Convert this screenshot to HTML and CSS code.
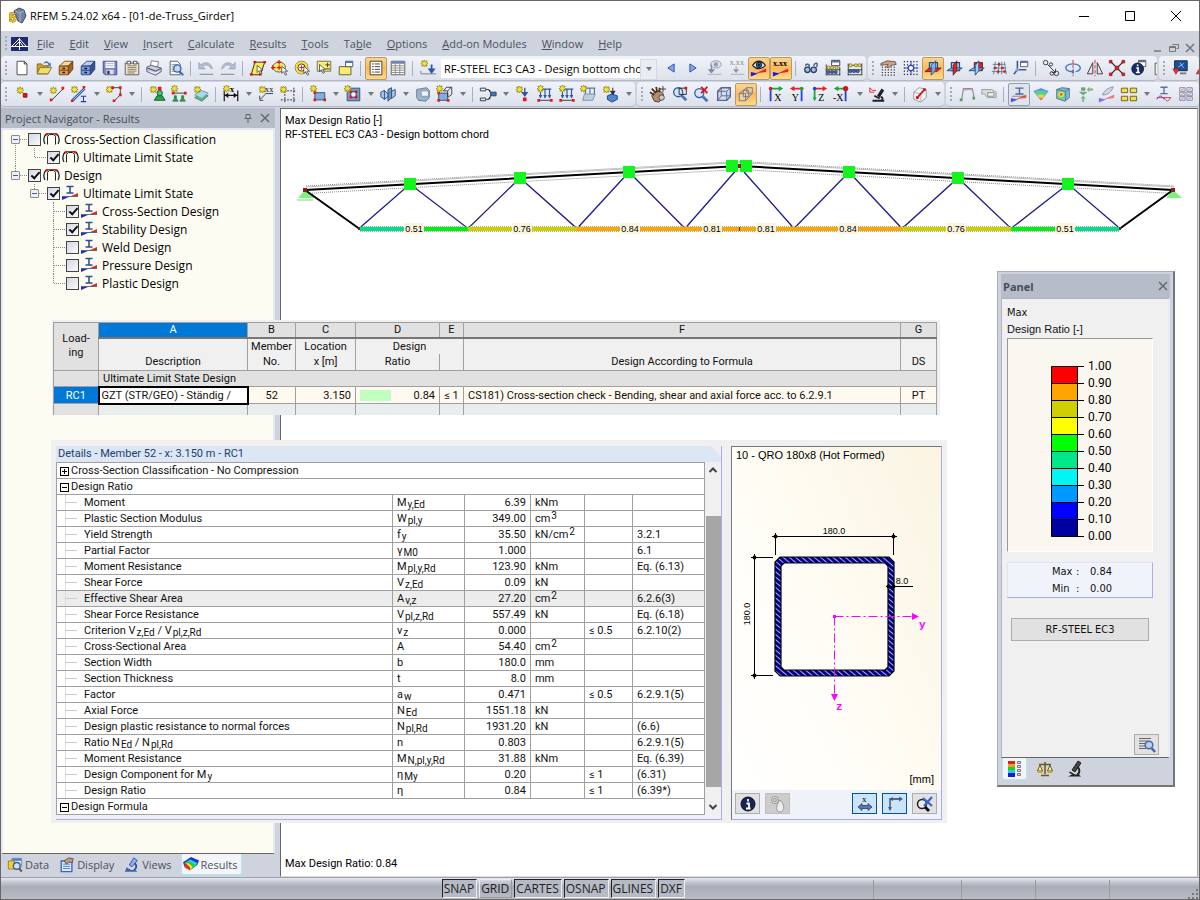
FILE: index.html
```html
<!DOCTYPE html>
<html lang="en">
<head>
<meta charset="utf-8">
<title>RFEM 5.24.02 x64 - [01-de-Truss_Girder]</title>
<link rel="stylesheet" href="styles.css">
</head>
<body>
<svg class="sprite" aria-hidden="true">
<defs>
<g id="st"><path d="M4 0v8M0 4h8M1 1l6 6M7 1l-6 6" stroke="#8f8420" stroke-width="1.6"/><path d="M4 1v6M1 4h6M2 2l4 4M6 2l-4 4" stroke="#ffee2a"/></g>
<g id="cur"><path d="M0 0v8l2-2 2 4 1.500-.8-2-3.700h3z" fill="#fff" stroke="#333" stroke-width=".8"/></g>
<g id="grad"><path d="M0 4v5l8-3.500z" fill="#1c1ce0"/><path d="M5 5.500L17 0v4z" fill="#e02a2a"/></g>
<linearGradient id="rainbow" x1="0" y1="0" x2="1" y2="1"><stop offset="0" stop-color="#2030ff"/><stop offset=".3" stop-color="#10d8f0"/><stop offset=".5" stop-color="#20e020"/><stop offset=".7" stop-color="#f6f020"/><stop offset="1" stop-color="#f02020"/></linearGradient>
<radialGradient id="soft" cx=".5" cy="1" r="1"><stop offset="0" stop-color="#f04030"/><stop offset=".35" stop-color="#f6e040"/><stop offset=".6" stop-color="#50d860"/><stop offset=".8" stop-color="#50c8e8"/><stop offset="1" stop-color="#5060e0"/></radialGradient>
<symbol id="new" viewBox="0 0 20 20"><path d="M4.500 2.500h8l3 3v12h-11z" fill="#fff" stroke="#444"/><path d="M12.500 2.500v3h3" class="k"/></symbol>
<symbol id="open" viewBox="0 0 20 20"><path d="M2.500 16.500v-11h5l1 2h6v9z" fill="#c9a62e" stroke="#77621a"/><path d="M2.500 16.500l3-7h13l-4 7z" fill="#f3dc73" stroke="#8a7320"/><path d="M9 5c3-4 6-3 7 0l1.500-1v5l-4-2 1.500-1c-1-2-3-2-6-1" fill="#4d74b8"/></symbol>
<symbol id="cabo" viewBox="0 0 20 20"><path d="M2.500 8l6-5.500h9l-4 5z" fill="#fbd89a" stroke="#7b4d14"/><path d="M12.500 8l5-5.500v9l-5 6z" fill="#a0641c" stroke="#5c3a0c"/><path d="M2.500 8h10v9.500h-10z" fill="#e0a04a" stroke="#6b4412"/><path d="M2.500 12.500h10" stroke="#6b4412"/><path d="M6 10.500h3M6 15h3" stroke="#2a1804" stroke-width="1.500"/></symbol>
<symbol id="cabb" viewBox="0 0 20 20"><path d="M2.500 8l6-5.500h9l-4 5z" fill="#b8cff2" stroke="#2c4780"/><path d="M12.500 8l5-5.500v9l-5 6z" fill="#32549c" stroke="#1f3569"/><path d="M2.500 8h10v9.500h-10z" fill="#7d9fe0" stroke="#263f78"/><path d="M2.500 12.500h10" stroke="#263f78"/><path d="M6 10.500h3M6 15h3" stroke="#0c1838" stroke-width="1.500"/></symbol>
<symbol id="save" viewBox="0 0 20 20"><path d="M2.500 2.500h15v15h-13l-2-2z" fill="#7f83c4" stroke="#44477c"/><path d="M5 3h10v7H5z" fill="#f4f4fb"/><path d="M6 5h8M6 7.500h8" stroke="#b0b4d0"/><path d="M6 12h8v5H6z" fill="#dcdce8"/><path d="M7 13h2.500v4H7z" fill="#333"/></symbol>
<symbol id="note" viewBox="0 0 20 20"><path d="M2.500 4.500h15v13h-15z" fill="#efe4cf" stroke="#555"/><path d="M5 7.500h10M5 9.500h10M5 11.500h10M5 13.500h10M5 15.500h8" stroke="#8a7c64"/><path d="M4.500 2.500h4v3h-4zM11.500 2.500h4v3h-4z" fill="#fff" stroke="#444"/></symbol>
<symbol id="print" viewBox="0 0 20 20"><path d="M6 8l1-6 8 1-1 6z" fill="#fff" stroke="#777"/><path d="M2 9l5-2 11 3v4l-6 4-10-4z" fill="#c9cbe0" stroke="#555a80"/><path d="M2.500 10l9.500 3.500 5.500-3" class="k"/><path d="M5 14l6 2 4-2" stroke="#fff" fill="none"/></symbol>
<symbol id="prev" viewBox="0 0 20 20"><path d="M3.500 2.500h8l3 3v12h-11z" fill="#fff" stroke="#555"/><path d="M5 6h7M5 8h6M5 10h4M5 12h3M5 14h4" stroke="#888"/><circle cx="11.500" cy="10.500" r="4" fill="#bcd6f4" fill-opacity=".9" stroke="#3a62a8" stroke-width="1.500"/><path d="M14 14l4 4" stroke="#4a70b8" stroke-width="2.500"/></symbol>
<symbol id="undo" viewBox="0 0 20 20"><path d="M2 4v7h7L6.500 8.500C9 6 13 6 15 10l2 1C16 4 9 2 4.500 6.500z" fill="#b4bed0" stroke="#8b97ae" stroke-width=".7"/><path d="M3 17h15" stroke="#999" stroke-width="1.500"/></symbol>
<symbol id="redo" viewBox="0 0 20 20"><path d="M18 4v7h-7l2.500-2.500C11 6 7 6 5 10l-2 1C4 4 11 2 15.500 6.500z" fill="#b4bed0" stroke="#8b97ae" stroke-width=".7"/><path d="M2 17h15" stroke="#999" stroke-width="1.500"/></symbol>
<symbol id="selp" viewBox="0 0 20 20"><path d="M2.500 17.500l4-14h11l-5 14z" fill="#fbee4c" stroke="#222"/><path d="M5 3.500h3M16 3.500h3M1 17h3M11 17h3" stroke="#d11" stroke-width="2.500"/><use href="#cur" x="9" y="7"/></symbol>
<symbol id="sele" viewBox="0 0 20 20"><ellipse cx="9" cy="9" rx="7" ry="5.500" fill="#fbee6c" stroke="#555"/><path d="M9 1v5M6.500 3.500h5M2 7v5M0 9.500h5M9 7v5M6.500 9.500h5" stroke="#e01010" stroke-width="1.300"/><use href="#cur" x="12" y="8"/></symbol>
<symbol id="selr" viewBox="0 0 20 20"><circle cx="9.500" cy="9.500" r="7" fill="#fff" stroke="#333"/><circle cx="9.500" cy="9.500" r="5.500" fill="none" stroke="#fbe22c" stroke-width="3"/><circle cx="9.500" cy="9.500" r="4" class="k"/><path d="M9.500 7v5M7 9.500h5" stroke="#e01010"/><use href="#cur" x="12" y="8"/></symbol>
<symbol id="selpm" viewBox="0 0 20 20"><path d="M2.500 2.500h15v11h-15z" fill="#fbee6c" stroke="#666"/><path d="M14 4v5M11.500 6.500h5M11.500 11h5" stroke="#333"/><use href="#cur" x="5" y="6"/></symbol>
<symbol id="selw" viewBox="0 0 20 20"><path d="M2.500 8.500h13v9h-13z" fill="#fbee6c" stroke="#555"/><path d="M9.500 2.500h8v6h-8z" fill="#fff" stroke="#555"/><path d="M9.500 3.500h8" stroke="#5572b0" stroke-width="2"/></symbol>
<symbol id="navlist" viewBox="0 0 20 20"><path d="M3.500 2.500h13v15h-13z" fill="#fff" stroke="#333"/><path d="M5.500 5.500h2M5.500 8.500h2M5.500 11.500h2M5.500 14.500h2M8.500 5.500h6M8.500 8.500h6M8.500 11.500h6M8.500 14.500h6" stroke="#333"/></symbol>
<symbol id="tbl" viewBox="0 0 20 20"><path d="M2.500 2.500h15v15h-15z" fill="#fff" stroke="#555"/><path d="M3 4h14" stroke="#6a83b8" stroke-width="2.500"/><path d="M3 7.500h14M3 10h14M3 12.500h14M3 15h14M7 5v12M12 5v12" stroke="#888"/></symbol>
<symbol id="lc" viewBox="0 0 20 20"><use href="#st" x="2" y="1"/><path d="M2 16.500h17M2 13v3" stroke="#777"/><path d="M14 6v8M11.500 11.500l2.500 3.500 2.500-3.500z" stroke="#2c56a8" stroke-width="2" fill="#2c56a8"/></symbol>
<symbol id="lt" viewBox="0 0 20 20"><path d="M13.500 5.500v9l-7-4.500z" fill="#86a8ec" stroke="#2546b0"/></symbol>
<symbol id="gt" viewBox="0 0 20 20"><path d="M6.500 5.500v9l7-4.500z" fill="#86a8ec" stroke="#2546b0"/></symbol>
<symbol id="eyeoff" viewBox="0 0 20 20"><ellipse cx="11" cy="6" rx="6" ry="4" fill="#dfe5ee" stroke="#8e98aa"/><circle cx="11" cy="6" r="2.500" fill="#8da0c0"/><path d="M6 6v8M3.500 12l2.500 3 2.500-3z" stroke="#7f8ba5" stroke-width="1.500" fill="#7f8ba5"/><path d="M2 17h15" stroke="#aaa"/></symbol>
<symbol id="xxoff" viewBox="0 0 20 20"><text x="2" y="7" class="xt" fill="#888">x.xx</text><path d="M9 8v6M6.500 12l2.500 3 2.500-3z" stroke="#8c97ac" fill="#8c97ac"/><path d="M3 17h15" stroke="#aaa"/></symbol>
<symbol id="eye" viewBox="0 0 20 20"><path d="M3 7c4-6 10-6 14 0-4 5-10 5-14 0z" fill="#e8eef8" stroke="#222" stroke-width="1.400"/><circle cx="10" cy="6.500" r="3" fill="#2b58b0" stroke="#111"/><circle cx="10" cy="6.500" r="1" fill="#000"/><use href="#grad" x="1" y="10.500"/></symbol>
<symbol id="xx" viewBox="0 0 20 20"><text x="1" y="8" class="xt xb">x.xx</text><use href="#grad" x="1" y="10.500"/></symbol>
<symbol id="glasses" viewBox="0 0 20 20"><path d="M4 8c0-4 5-2 4 1M13 8c1-5 6-4 3 1" stroke="#49628f" stroke-width="1.600" fill="none"/><circle cx="6" cy="12" r="3" fill="#a8bfe2" stroke="#2e4470" stroke-width="1.500"/><circle cx="13" cy="12" r="3" fill="#a8bfe2" stroke="#2e4470" stroke-width="1.500"/></symbol>
<symbol id="abw" viewBox="0 0 20 20"><path d="M2.500 6v12M17.500 9v9M2 17.500h16M2 12h16" class="k"/><path d="M8.500 1.500h9v6h-9z" fill="#fff" stroke="#333"/><path d="M9 3h8" stroke="#5572b0" stroke-width="2"/><g fill="#ecd44a" stroke="#6b5d14" stroke-width=".7"><circle cx="5" cy="9.500" r="1.800"/><circle cx="9" cy="9.500" r="1.800"/><circle cx="14" cy="9.500" r="1.800"/></g><g fill="#3f66b8" stroke="#1c2f60" stroke-width=".7"><circle cx="5" cy="14.500" r="1.800"/><circle cx="9" cy="14.500" r="1.800"/><circle cx="13" cy="14.500" r="1.800"/></g></symbol>
<symbol id="ab" viewBox="0 0 20 20"><path d="M2.500 5v13M17.500 5v13M2 17.500h16M2 12h16M2 7h16" class="k"/><g fill="#ecd44a" stroke="#6b5d14" stroke-width=".7"><circle cx="5" cy="7" r="1.800"/><circle cx="11" cy="7" r="1.800"/><circle cx="15" cy="7" r="1.800"/></g><g fill="#3f66b8" stroke="#1c2f60" stroke-width=".7"><circle cx="5" cy="13.500" r="1.800"/><circle cx="9" cy="13.500" r="1.800"/><circle cx="13" cy="13.500" r="1.800"/></g></symbol>
<symbol id="handgrid" viewBox="0 0 20 20"><path d="M2 9h16M2 12h16M2 15h16M2 18h16" stroke="#333" stroke-width="1.300" stroke-dasharray="1.300 2"/><path d="M1 5l7-3 9 1 1 3-5 1-4 3-2-1 2-3-8 1z" fill="#c9a287" stroke="#4e3a2a" stroke-width=".8"/></symbol>
<symbol id="grid" viewBox="0 0 20 20"><path d="M2 3h16M2 6.500h16M2 13.500h16M2 17h16M2 10h16" stroke="#222" stroke-width="1.300" stroke-dasharray="1.300 2.200"/><path d="M10 2v16M2 10h16" stroke="#2c40c8"/><circle cx="10" cy="10" r="3" fill="#fff" stroke="#2c40c8" stroke-width="1.300"/></symbol>
<symbol id="cube1" viewBox="0 0 20 20"><path d="M6 4h9v9H6z" fill="#a9d0f0" stroke="#1c4f88" stroke-width="1.300"/><path d="M1 14l5-4h13l-5 4z" fill="#f02020" stroke="#5a1010" stroke-width=".8"/><path d="M8 7l5-5v11l-5 5z" fill="#78b4e8" fill-opacity=".8" stroke="#1c4f88"/></symbol>
<symbol id="cube2" viewBox="0 0 20 20"><path d="M6 4h9v9H6z" fill="#a9d0f0" stroke="#1c4f88" stroke-width="1.300"/><path d="M1 13l5-3h12l-5 3z" fill="#78b4e8" stroke="#1c4f88"/><path d="M8 7l4-5v11l-4 5z" fill="#f02020" stroke="#5a1010" stroke-width=".8"/></symbol>
<symbol id="cube3" viewBox="0 0 20 20"><path d="M7 4h9v9H7z" fill="#f02020" stroke="#5a1010"/><path d="M1 13l5-3h12l-5 3z" fill="#78b4e8" stroke="#1c4f88"/><path d="M8 7l4-5v11l-4 5z" fill="#a9d0f0" stroke="#1c4f88"/></symbol>
<symbol id="gridred" viewBox="0 0 20 20"><path d="M4 17L6 3M9 17l1-14M13 17V3M18 17L16 3M3 6h14M3 10h15M2 14h16" stroke="#4a86a0" fill="none"/><path d="M10 6h.1M6 10h.1M14 10h.1M9 14h.1M16 14h.1" stroke="#e01818" stroke-width="3" stroke-linecap="round"/></symbol>
<symbol id="axwin" viewBox="0 0 20 20"><path d="M9.500 2.500h8v6h-8z" fill="#fff" stroke="#555"/><path d="M10 3.500h7" stroke="#5572b0" stroke-width="2"/><path d="M6 2v10h10M6 12l-4 5" stroke="#3a5ea0" stroke-width="1.800" fill="none"/><circle cx="6" cy="12" r="2" fill="#88a4d8"/></symbol>
<symbol id="circ" viewBox="0 0 20 20"><circle cx="4" cy="4" r="2.500" class="k"/><circle cx="10" cy="6" r="1.800" class="k"/><path d="M6 6l9 9M15 15v-4M15 15h-4" class="k"/><circle cx="11" cy="16" r="2" class="k"/><circle cx="16" cy="16" r="2.500" class="k"/></symbol>
<symbol id="rot" viewBox="0 0 20 20"><path d="M10 1v18" stroke="#e02020" stroke-dasharray="4 1.500"/><path d="M8 14c-7-1-8-6-2-8 5-1.500 12 0 12 4 0 2-2 3.500-5 4" stroke="#4a78c0" stroke-width="1.600" fill="none"/><path d="M11 11v6l-4-3z" fill="#4a78c0"/></symbol>
<symbol id="mirror" viewBox="0 0 20 20"><path d="M10 1v18" stroke="#e02020" stroke-dasharray="4 1.500"/><path d="M7.500 4v12.500h-6zM12.500 4v12.500h6z" class="k"/></symbol>
<symbol id="xred" viewBox="0 0 20 20"><path d="M3 3l14 14M17 3L3 17" stroke="#222" stroke-width="1.300"/><path d="M1.500 1.500h3v3h-3zM15.500 1.500h3v3h-3zM1.500 15.500h3v3h-3zM15.500 15.500h3v3h-3zM8 8h4v4H8z" fill="#f01818" stroke="#700" stroke-width=".6"/></symbol>
<symbol id="infow" viewBox="0 0 20 20"><path d="M9.500 1.500h8v7h-8z" fill="#fff" stroke="#555"/><path d="M10 2.500h7" stroke="#667" stroke-width="2"/><circle cx="8.500" cy="11" r="6.500" fill="#1a2c68" stroke="#0a1538"/><path d="M8.500 6v2M7 10h2v5M6.500 15h4.500" stroke="#fff" stroke-width="1.800" fill="none"/></symbol>
<symbol id="clip" viewBox="0 0 20 20"><path d="M3.500 4.500h10v13h-10z" fill="#f6efd8" stroke="#555"/><path d="M6 3h6M6 8.500h6M6 11.500h6" stroke="#555"/></symbol>
<symbol id="mon" viewBox="0 0 20 20"><path d="M4 2h14v11H4z" fill="#1c4f98" stroke="#123"/><path d="M8 9l6-4M10 4l4 6" stroke="#8cd0ff"/><path d="M2 11l7 0-3.500 6z" fill="#f03030" stroke="#901010" stroke-width=".6"/><path d="M10 16h7" stroke="#777" stroke-width="2"/></symbol>
<symbol id="tri" viewBox="0 0 20 20"><path d="M3 17l3-6 3 6z" fill="#e03030"/></symbol>
<symbol id="node" viewBox="0 0 20 20"><use href="#st" x="4" y="2"/><path d="M11.500 9.500h4v4h-4z" fill="#e81818" stroke="#900"/></symbol>
<symbol id="line" viewBox="0 0 20 20"><use href="#st" x="2" y="2"/><path d="M4 17L17 4" class="k"/><path d="M2 15h3v3H2zM15 2h3v3h-3z" fill="#e81818"/></symbol>
<symbol id="memb" viewBox="0 0 20 20"><use href="#st" x="1" y="1"/><path d="M3 17L16 4" stroke="#2e5aa8" stroke-width="3"/><path d="M3 17L16 4" stroke="#bcd8f4"/><path d="M1 16h3v3H1zM14 1h3v3h-3z" fill="#e81818"/><path d="M12 12.500h6M12 18.500h6M15 12.500v6" stroke="#2a3f90" stroke-width="1.200"/></symbol>
<symbol id="poly" viewBox="0 0 20 20"><use href="#st" x="1" y="1"/><path d="M8 3h9v8l-7 7" class="k"/><path d="M7 1.500h3v3H7zM15.500 1.500h3v3h-3zM15.500 9.500h3v3h-3zM8.500 16h3v3h-3z" fill="#e81818"/></symbol>
<symbol id="supp" viewBox="0 0 20 20"><use href="#st" x="2" y="1"/><path d="M11 2h4v4h-4z" fill="#e81818"/><circle cx="13" cy="9" r="3" fill="#4fc070" stroke="#145c28"/><path d="M10 12h6l3 5H7z" fill="#2fa052" stroke="#145c28"/></symbol>
<symbol id="supp2" viewBox="0 0 20 20"><use href="#st" x="1" y="0"/><path d="M3 9h14" class="k"/><path d="M2 7.500h3v3H2zM15.500 7.500h3v3h-3z" fill="#e81818"/><circle cx="6" cy="13" r="1.800" fill="#2fa052"/><circle cx="14" cy="13" r="1.800" fill="#2fa052"/><path d="M6 13l3 5H3zM14 13l3 5h-6z" fill="#2fa052" stroke="#145c28" stroke-width=".6"/></symbol>
<symbol id="surf" viewBox="0 0 20 20"><path d="M3 14l7-5 8 3-7 6z" fill="#6fae7e" stroke="#4b8a5c"/><path d="M3 11l7-5 8 3-7 6z" fill="#a8d8ec" stroke="#5c9cb0"/><use href="#st" x="2" y="1"/></symbol>
<symbol id="dim" viewBox="0 0 20 20"><path d="M2.500 6v12M17.500 6v12M3 11.500h14" stroke="#111" stroke-width="1.300"/><path d="M3 11.500l4-3v6zM17 11.500l-4-3v6z" fill="#111"/><use href="#st" x="1" y="0"/><text x="9" y="8" class="xt xb">x</text></symbol>
<symbol id="comm" viewBox="0 0 20 20"><use href="#st" x="2" y="1"/><text x="9" y="8" class="xt">xx</text><path d="M18 9.500h-8l-7 7M3 16v-4M3 17h4" class="k"/></symbol>
<symbol id="gl" viewBox="0 0 20 20"><path d="M6.500 3v16M16.500 3v16M2 6.500h17M2 16.500h17" stroke="#222" stroke-dasharray="2 1.500"/><use href="#st" x="1" y="1"/></symbol>
<symbol id="rect" viewBox="0 0 20 20"><path d="M6.500 8.500h11v8h-11z" fill="#7fb0dc" stroke="#2a4a80"/><path d="M5 7h3v3H5zM16 15h3v3h-3zM5 15h3v3H5z" fill="#e81818"/><use href="#st" x="1" y="0"/></symbol>
<symbol id="openg" viewBox="0 0 20 20"><path d="M3.500 3.500h14v14h-14z" fill="#6f9fd0" stroke="#2a4a80"/><path d="M7.500 7.500h6v6h-6z" fill="#e8f0f8" stroke="#333"/><path d="M6 6h3v3H6zM12 6h3v3h-3zM6 12h3v3H6zM12 12h3v3h-3z" fill="#e81818"/><use href="#st" x="0" y="0"/></symbol>
<symbol id="inter" viewBox="0 0 20 20"><path d="M2 8l4-2 4 4 4-3 4-2v7l-4 3-4-2-4 3-4-3z" fill="#a8ccec" stroke="#26466f"/><path d="M10 5l4-2v11l-4 4z" fill="#5c8cc0" fill-opacity=".8" stroke="#26466f"/><path d="M6 6v10" stroke="#26466f"/></symbol>
<symbol id="solid" viewBox="0 0 20 20"><path d="M3 5l11-2 3 3v8l-4 4-8-1-2-3z" fill="#9db3cc" stroke="#5e7690"/><path d="M8 6.500h8v6H8z" fill="#f0f4fa" stroke="#8090a4"/></symbol>
<symbol id="solid2" viewBox="0 0 20 20"><path d="M3 9h10v8H3z" fill="#7fb0dc" stroke="#2a4a80"/><path d="M8.500 6.500l3-4h6v8l-4 3" class="k"/><path d="M8 6.500h5V13M13 6.500l4-4" class="k"/><path d="M1.500 7.500h3v3h-3zM1.500 15.500h3v3h-3zM12 15.500h3v3h-3z" fill="#e81818"/><use href="#st" x="0" y="0"/></symbol>
<symbol id="loadc" viewBox="0 0 20 20"><path d="M1.500 3.500h6v3h-6zM1.500 14.500h6v3h-6z" class="k"/><path d="M8 5h3l3 5-3 6H8" class="k"/><path d="M10 5l3 1-1 2zM10 16l3-1-1-2z" fill="#222"/><path d="M13 8h6v4h-6z" fill="#3f74c0" stroke="#1c3f78"/></symbol>
<symbol id="nload" viewBox="0 0 20 20"><use href="#st" x="2" y="1"/><path d="M12 3v8M9.500 8.500l2.500 3.500 2.500-3.500z" stroke="#2c56a8" fill="#2c56a8" stroke-width="1.500"/><path d="M10 14h4v4h-4z" fill="#e81818"/></symbol>
<symbol id="lload" viewBox="0 0 20 20"><path d="M3 4.500h14M5 5v9M10 5v9M15 5v9" stroke="#2c56a8" stroke-width="1.300"/><path d="M3 11h4l-2 4zM8 11h4l-2 4zM13 11h4l-2 4z" fill="#2c56a8"/><path d="M3 17h14" class="k"/><path d="M1.500 15.500h3v3h-3zM15.500 15.500h3v3h-3z" fill="#e81818"/><use href="#st" x="1" y="0"/></symbol>
<symbol id="sload" viewBox="0 0 20 20"><path d="M4 3.500h13M6 4v7M11 4v7M16 4v7" stroke="#55799c" stroke-width="1.300"/><path d="M5 10h12l-3 7H3z" fill="#bcd0de" stroke="#7890a4"/><use href="#st" x="0" y="0"/></symbol>
<symbol id="vload" viewBox="0 0 20 20"><path d="M6 12l5-2 6 2v4l-6 3-5-3z" fill="#4f88cc" stroke="#1c3f78"/><path d="M12 3v6M9.500 7l2.500 3.500L14.500 7z" stroke="#222" fill="#2c56a8"/><use href="#st" x="1" y="1"/></symbol>
<symbol id="hand" viewBox="0 0 20 20"><path d="M5 9l3-2 5 0 3 3-1 5-4 4-5-1-3-6z" fill="#b48e70" stroke="#4a3524"/><path d="M3 4l5 5M8 2l1 6M1 8l5 3M12 3l-1 5" stroke="#4a3524" stroke-width="2"/><path d="M15.500 1v7M12 4.500h7" stroke="#333"/><circle cx="14" cy="14" r="3" fill="#ccc" stroke="#444"/></symbol>
<symbol id="zoomr" viewBox="0 0 20 20"><circle cx="8" cy="8" r="5" fill="#d4e4fa" stroke="#345ca4" stroke-width="1.500"/><path d="M12 12l5 5" stroke="#4a70c0" stroke-width="3"/><path d="M9 3.500h8v7H9z" fill="none" stroke="#222"/><path d="M15 2h3v3h-3z" fill="#d01818"/></symbol>
<symbol id="zoomx" viewBox="0 0 20 20"><circle cx="7" cy="9" r="5" fill="#d4e4fa" stroke="#345ca4" stroke-width="1.500"/><path d="M11 13l5 5" stroke="#4a70c0" stroke-width="3"/><path d="M9 2l7 7M16 2L9 9" stroke="#d01818" stroke-width="2"/></symbol>
<symbol id="wire" viewBox="0 0 20 20"><path d="M3 7l4-4h10v10l-4 4H3z" fill="#d0dcf0" stroke="#56688c" stroke-width="1.500"/><path d="M3 7h10v10M13 7l4-4M7 3v9h10M7 12l-4 5" stroke="#56688c" fill="none"/></symbol>
<symbol id="persp" viewBox="0 0 20 20"><path d="M2.500 9.500h7v8h-7zM7 6h6v7H7zM11 3h6v6h-6z" fill="#f6cf8c" stroke="#6874a0"/><path d="M2.500 9.500L11 3M9.500 17.500L17 9" stroke="#6874a0"/></symbol>
<symbol id="vx" viewBox="0 0 20 20"><path d="M4 5v13" stroke="#2440e0" stroke-width="2"/><path d="M2.500 4h12" stroke="#18a838" stroke-width="2"/><path d="M13 1l5 3-5 3z" fill="#18a838"/><circle cx="4" cy="4" r="2" fill="#e01818"/><text x="8" y="18" class="ax">X</text></symbol>
<symbol id="vy" viewBox="0 0 20 20"><path d="M14 5v13" stroke="#2440e0" stroke-width="2"/><path d="M4 4h12" stroke="#e02828" stroke-width="2"/><path d="M6 1L1 4l5 3z" fill="#e02828"/><circle cx="14" cy="4" r="2" fill="#18a838"/><text x="3" y="18" class="ax">Y</text></symbol>
<symbol id="vz" viewBox="0 0 20 20"><path d="M4 4v12" stroke="#18a838" stroke-width="2"/><path d="M2 14h4l-2 4z" fill="#18a838"/><path d="M4 4h11" stroke="#e02828" stroke-width="2"/><path d="M13 1l5 3-5 3z" fill="#e02828"/><circle cx="4" cy="4" r="2" fill="#2440e0"/><text x="8" y="18" class="ax">Z</text></symbol>
<symbol id="vmx" viewBox="0 0 20 20"><path d="M14 5v13" stroke="#2440e0" stroke-width="2"/><path d="M3 4h12" stroke="#18a838" stroke-width="2"/><path d="M6 1L1 4l5 3z" fill="#18a838"/><circle cx="14" cy="4" r="3" fill="#d01818"/><text x="0" y="18" class="ax">-X</text></symbol>
<symbol id="micro" viewBox="0 0 20 20"><path d="M10 12l5-8 3 2-5 8z" fill="#222"/><path d="M5 17.500h13M7 12l6 3M14 13c3 1 3 3 0 5" stroke="#222" stroke-width="2" fill="none"/><path d="M2 3v5h5M2 3l3 3h4" stroke="#e02020" fill="none"/></symbol>
<symbol id="clipc" viewBox="0 0 20 20"><path d="M3 8l6-5 8 2v9l-6 5-8-3z" fill="#eef1f5" stroke="#999"/><path d="M3 8l8 2v9M11 10l6-5" stroke="#aaa" fill="none"/><path d="M7 14l8-9" stroke="#c01818" stroke-width="2"/><path d="M5.500 12.500h3v3h-3zM13.500 3.500h3v3h-3z" fill="#d01818"/></symbol>
<symbol id="frame" viewBox="0 0 20 20"><path d="M4 17l2-13h10l2 11" stroke="#8b8f96" stroke-width="1.300" fill="none"/><path d="M6 5c2 2 7-2 9 1" stroke="#b07a7a" fill="none"/><path d="M2 15h3v3H2zM16 13h3v3h-3z" fill="#5aa05a"/></symbol>
<symbol id="tag" viewBox="0 0 20 20"><path d="M2 5h11l5 3v6H8l-3-4H2z" fill="#d8dade" stroke="#999"/><path d="M8.500 8.500h7v4h-7z" fill="#f0f0f0" stroke="#888"/></symbol>
<symbol id="isec" viewBox="0 0 20 20"><path d="M6 3.500h9M6 10h9M10.500 3.500V10" stroke="#4c68a8" stroke-width="1.600"/><path d="M2 12.500h16" stroke="#888"/><g opacity=".7"><use href="#grad" x="1" y="10.500"/></g></symbol>
<symbol id="rb" viewBox="0 0 20 20"><path d="M2 7l8-3 8 3-8 10z" fill="url(#soft)" stroke="#779" stroke-width=".6"/></symbol>
<symbol id="rbc" viewBox="0 0 20 20"><path d="M3 5l6-2 8 1v10l-5 4-9-3z" fill="#68c8d8" stroke="#668"/><circle cx="8" cy="10.500" r="4.500" fill="#70d860"/><circle cx="8" cy="10.500" r="3" fill="#f0e050"/><circle cx="8" cy="10.500" r="1.500" fill="#e85030"/><path d="M3 5l10 2v11M13 7l4-3" stroke="#5868a0" fill="none"/></symbol>
<symbol id="garr" viewBox="0 0 20 20"><path d="M4 8h8l-4 3zM6 3h4v3H6z" fill="#6cab7a" stroke="#5a9068" stroke-width=".6"/><path d="M12 5l3-3v2h4v2h-4v2zM8 12l3 3H9v4H7v-4H5z" fill="#7ab488"/></symbol>
<symbol id="plane" viewBox="0 0 20 20"><path d="M5 11c2-5 6-8 12-9-2 5-5 9-12 9z" fill="#cdd6e2" stroke="#8494aa"/><g opacity=".55"><use href="#grad" x="1" y="10.500"/></g></symbol>
<symbol id="multi" viewBox="0 0 20 20"><g fill="#f4dc5a" stroke="#6a5a10"><path d="M1.500 3.500h7v5h-7zM11.500 3.500h7v5h-7zM1.500 12.500h7v5h-7zM11.500 12.500h7v5h-7z"/></g></symbol>
<symbol id="icurve" viewBox="0 0 20 20"><path d="M6 2.500h8M6 9.500h8M10 2.500v7" stroke="#586ea4" stroke-width="1.500"/><path d="M2 16c3-5 5-5 8 0" stroke="#2244d0" fill="none"/><path d="M10 14c3 5 5 5 7 0M2 14h16" stroke="#d03050" fill="none"/></symbol>
<symbol id="cells" viewBox="0 0 20 20"><path d="M3 3h6v4H3zM11 3h6v4h-6zM3 8h6v4H3zM11 8h6v4h-6zM3 13h6v4H3zM11 13h6v4h-6z" fill="#eef0f6" stroke="#7a86a4"/><path d="M4 6l4-2M12 6l4-2M4 11l4-2M12 11l4-2M4 16l4-2M12 16l4-2" stroke="#c88"/></symbol>
<symbol id="xs" viewBox="0 0 18 16"><path d="M5.500 13.500V5.500l2-2h4l2 2v8" stroke="#222" fill="none"/><path d="M4 2.500h11" stroke="#555"/><path d="M4 3C1.500 6 1.500 10 3 13M15 3c2.500 3 2.500 7 1 10" stroke="#222" fill="none" stroke-width="1.300"/><path d="M4 2h2.500v2.500H4zM12.500 2H15v2.500h-2.500z" fill="#e02020"/></symbol>
<symbol id="ul" viewBox="0 0 18 16"><path d="M5.500 1.500h7M5.500 8h7M9 1.500V8" stroke="#364f8c" stroke-width="1.600"/><path d="M1 11v4l8-3.500z" fill="#2222e8"/><path d="M9 11.500l8-3.500v4z" fill="#e02a2a"/><path d="M1 11.500h16" stroke="#666"/></symbol>
<symbol id="tdata" viewBox="0 0 18 18"><path d="M5.500 1.500h11v9h-11z" fill="#e4ecf8" stroke="#6a83b8"/><path d="M6 3h10" stroke="#4d7ac8" stroke-width="2.500"/><path d="M1.500 4.500h7v9h-7z" fill="#f0cf3a" stroke="#9a7f18"/><circle cx="11" cy="10" r="3.800" fill="#cfe2f8" stroke="#3c5c94" stroke-width="1.500"/><path d="M13.500 12.500l3 4" stroke="#7a5a3a" stroke-width="2.500"/></symbol>
<symbol id="tdisp" viewBox="0 0 18 18"><path d="M2.500 4.500h12v12h-12z" fill="#dfeafa" stroke="#3a66b8" stroke-width="1.500"/><path d="M4.500 8h8M4.500 10.500h8M4.500 13h8" stroke="#4c79c8"/><path d="M6 4l5-3 5 1-1 4-4 0-3 2z" fill="#c09a80" stroke="#4e3a2a" stroke-width=".8"/></symbol>
<symbol id="tview" viewBox="0 0 18 18"><path d="M11 1l4 3-6 7-3-2z" fill="#8eb0ea" stroke="#2c4c98"/><path d="M12 7c3 3 2 6-1 8" stroke="#2c4c98" stroke-width="2" fill="none"/><path d="M1 16.500h14l-2-2H8l-5-3z" fill="#3c62b8"/></symbol>
<symbol id="tres" viewBox="0 0 18 18"><path d="M0 7l9-6 9 4-2 5-8 6-6-3z" fill="#1830d8"/><path d="M2 7.500l6-3.500 8 4-1 2-7 6-5-3z" fill="#20d8e0"/><path d="M2 8l5-2 7 4-6 6-5-3z" fill="#20d030"/><path d="M2 9l4-1 5 4-3 4-5-3z" fill="#f6e820"/><path d="M1 7.500l3 1.500 4 4 0 3-5-3z" fill="#f02020"/></symbol>
<symbol id="scale" viewBox="0 0 18 18"><path d="M9 2v12M3 4.500h12M5 15.500h8" stroke="#6b5a1c" stroke-width="1.500"/><path d="M4 5L1.500 11h5zM14 5l-2.500 6h5z" fill="#f6eebc" stroke="#6b5a1c"/><path d="M1 11h6l-1 2H2zM11 11h6l-1 2h-4z" fill="#c9a62e"/></symbol>
<symbol id="mic" viewBox="0 0 18 18"><path d="M12 1l3 2-6 9-3-2z" fill="#444" stroke="#222"/><path d="M12 7c2 3 2 6-1 8" stroke="#222" stroke-width="2" fill="none"/><path d="M2 16.500h13l-2-2H9l-5-3-1 1 3 2z" fill="#222"/></symbol>
<symbol id="leg" viewBox="0 0 18 18"><path d="M2 1h7v3H2z" fill="#e02020"/><path d="M2 4h7v3H2z" fill="#f0a020"/><path d="M2 7h7v3H2z" fill="#20d020"/><path d="M2 10h7v3H2z" fill="#20d0e0"/><path d="M2 13h7v4H2z" fill="#1818e0"/><path d="M11.500 1.500h3v2h-3zM11.500 5.500h3v2h-3zM11.500 9.500h3v2h-3zM11.500 13.500h3v2h-3z" fill="#ddd" stroke="#777"/></symbol>
<symbol id="bi" viewBox="0 0 18 18"><circle cx="9" cy="9" r="7" fill="#1a2450" stroke="#0a1030"/><path d="M9 4v2.500M7.500 8.500H10v5M7 13.500h4.500" stroke="#fff" stroke-width="1.800" fill="none"/></symbol>
<symbol id="bdrop" viewBox="0 0 18 18"><circle cx="6" cy="5" r="3.500" fill="#ddd" stroke="#999"/><circle cx="6" cy="5" r="1.500" fill="none" stroke="#999"/><path d="M11 5c6 6 4 12 0 12s-5-6 0-12z" fill="#ececec" stroke="#999"/></symbol>
<symbol id="bx" viewBox="0 0 18 18"><text x="6" y="7" class="bxt">x</text><path d="M2 12l4-3.500v2h6v-2l4 3.500-4 3.500v-2H6v2z" fill="#5a76b4" stroke="#1e2f60" stroke-width=".7"/></symbol>
<symbol id="bax" viewBox="0 0 18 18"><path d="M4 15V4h11" stroke="#333f70" stroke-width="1.300" fill="none"/><path d="M2 12h4l-2 4zM13 1.500l4 2.500-4 2.500zM7 2L3 4l4 2z" fill="#3c5aa4"/></symbol>
<symbol id="bzx" viewBox="0 0 18 18"><circle cx="6" cy="9" r="4.500" fill="#e8ecf4" stroke="#222" stroke-width="1.500"/><path d="M9 12l4 4" stroke="#111" stroke-width="3"/><path d="M7 3l9 8M16 2L8 11" stroke="#3a64c8" stroke-width="2.200"/></symbol>
<symbol id="blist" viewBox="0 0 18 18"><path d="M1 2.500h12M1 5h9M1 7.500h6M1 10h6M1 12.500h7" stroke="#666"/><circle cx="11" cy="9" r="3.800" fill="#b8d0f4" stroke="#4a68a8" stroke-width="1.500"/><path d="M13.500 12l3.500 4" stroke="#4a68a8" stroke-width="2.500"/></symbol>
</defs>
</svg>

<div class="app">
<header class="title">
  <svg class="logo" viewBox="0 0 18 18" aria-hidden="true"><path d="M5 4l5-3 5 2 2 6-4 7-4-2z" fill="#71839c" stroke="#3d4c62"/><path d="M6 4l5 2 4-2M11 6v9" stroke="#a8b6c8" fill="none"/><text x="0" y="15" class="five">5</text></svg>
  <h1>RFEM 5.24.02 x64 - [01-de-Truss_Girder]</h1>
  <div class="winbtns">
    <button aria-label="Minimize"><svg viewBox="0 0 12 12"><path d="M1 6.500h10" stroke="#000"/></svg></button>
    <button aria-label="Maximize"><svg viewBox="0 0 12 12"><path d="M1.500 1.500h9v9h-9z" stroke="#000" fill="none"/></svg></button>
    <button aria-label="Close"><svg viewBox="0 0 12 12"><path d="M1 1l10 10M11 1L1 11" stroke="#000"/></svg></button>
  </div>
</header>
<nav class="menu">
  <i class="grip"></i>
  <svg class="bridge" viewBox="0 0 17 14" aria-hidden="true"><path d="M0 0h17v14H0z" fill="#1f2b6c"/><path d="M0 9.500h17M8.500 1v12M8 2L1 9M8.500 2L15 9M8 5L4 9M9 5l3 4" stroke="#fff" fill="none"/></svg>
  <button><u>F</u>ile</button><button><u>E</u>dit</button><button><u>V</u>iew</button><button><u>I</u>nsert</button><button><u>C</u>alculate</button><button><u>R</u>esults</button><button><u>T</u>ools</button><button>Ta<u>b</u>le</button><button><u>O</u>ptions</button><button><u>A</u>dd-on Modules</button><button><u>W</u>indow</button><button><u>H</u>elp</button>
  <div class="mdi">
    <button aria-label="Minimize document"><svg viewBox="0 0 10 10"><path d="M1 8h7" stroke="#777" stroke-width="1.500"/></svg></button>
    <button aria-label="Restore document"><svg viewBox="0 0 10 10"><path d="M3.500 1.500h6v4h-2M.5 3.500h6v5h-6zM.5 4.500h6" stroke="#777" fill="none"/></svg></button>
    <button aria-label="Close document"><svg viewBox="0 0 10 10"><path d="M1 1l8 8M9 1L1 9" stroke="#777" stroke-width="1.600"/></svg></button>
  </div>
</nav>

<div class="bars">
<div class="bar">
  <div class="group">
    <i class="grip"></i>
    <button aria-label="New"><svg><use href="#new"/></svg></button><button aria-label="Open"><svg><use href="#open"/></svg></button><button aria-label="Project manager"><svg><use href="#cabo"/></svg></button><button aria-label="Block manager"><svg><use href="#cabb"/></svg></button><button aria-label="Save"><svg><use href="#save"/></svg></button><button aria-label="Report"><svg><use href="#note"/></svg></button><button aria-label="Print"><svg><use href="#print"/></svg></button><button aria-label="Preview"><svg><use href="#prev"/></svg></button>
    <i class="sep"></i>
    <button aria-label="Undo"><svg><use href="#undo"/></svg></button><button aria-label="Redo"><svg><use href="#redo"/></svg></button>
    <i class="sep"></i>
    <button aria-label="Select polygon"><svg><use href="#selp"/></svg></button><button aria-label="Select ellipse"><svg><use href="#sele"/></svg></button><button aria-label="Select ring"><svg><use href="#selr"/></svg></button><button aria-label="Add to selection"><svg><use href="#selpm"/></svg></button><button aria-label="Special selection"><svg><use href="#selw"/></svg></button>
    <i class="sep"></i>
    <button class="on" aria-label="Navigator"><svg><use href="#navlist"/></svg></button><button aria-label="Tables"><svg><use href="#tbl"/></svg></button>
    <i class="sep"></i>
    <button aria-label="New load case"><svg><use href="#lc"/></svg></button>
    <span class="combo"><select aria-label="Load case"><option>RF-STEEL EC3 CA3 - Design bottom chord</option></select></span>
    <button aria-label="Previous"><svg><use href="#lt"/></svg></button><button aria-label="Next"><svg><use href="#gt"/></svg></button><button aria-label="Show loads"><svg><use href="#eyeoff"/></svg></button><button aria-label="Load values"><svg><use href="#xxoff"/></svg></button><button class="on" aria-label="Show results"><svg><use href="#eye"/></svg></button><button class="on" aria-label="Result values"><svg><use href="#xx"/></svg></button>
    <i class="sep"></i>
    <button aria-label="View options"><svg><use href="#glasses"/></svg></button><button aria-label="Calculator settings"><svg><use href="#abw"/></svg></button><button aria-label="Calculate"><svg><use href="#ab"/></svg></button>
  </div>
  <div class="group grow">
    <i class="grip"></i>
    <button aria-label="Edit grid"><svg><use href="#handgrid"/></svg></button><button aria-label="Grid"><svg><use href="#grid"/></svg></button><button class="on" aria-label="Plane XY"><svg><use href="#cube1"/></svg></button><button aria-label="Plane YZ"><svg><use href="#cube2"/></svg></button><button aria-label="Plane XZ"><svg><use href="#cube3"/></svg></button><button aria-label="Mesh"><svg><use href="#gridred"/></svg></button><button aria-label="Coordinate system"><svg><use href="#axwin"/></svg></button>
    <i class="sep"></i>
    <button aria-label="Move"><svg><use href="#circ"/></svg></button><button aria-label="Rotate"><svg><use href="#rot"/></svg></button><button aria-label="Mirror"><svg><use href="#mirror"/></svg></button><button aria-label="Intersect"><svg><use href="#xred"/></svg></button><button aria-label="Info"><svg><use href="#infow"/></svg></button><button aria-label="Clipboard"><svg><use href="#clip"/></svg></button>
  </div>
  <div class="group last">
    <i class="grip"></i>
    <button aria-label="Modules"><svg><use href="#mon"/></svg></button><button aria-label="More"><svg><use href="#tri"/></svg></button>
  </div>
</div>
<div class="bar">
  <div class="group">
    <i class="grip"></i>
    <button aria-label="Node"><svg><use href="#node"/></svg></button><button class="dd" aria-label="Node types"></button><button aria-label="Line"><svg><use href="#line"/></svg></button><button aria-label="Member"><svg><use href="#memb"/></svg></button><button class="dd" aria-label="Member types"></button><button aria-label="Polyline"><svg><use href="#poly"/></svg></button><button class="dd" aria-label="Polyline types"></button>
    <i class="sep"></i>
    <button aria-label="Nodal support"><svg><use href="#supp"/></svg></button><button aria-label="Line support"><svg><use href="#supp2"/></svg></button><button aria-label="Surface support"><svg><use href="#surf"/></svg></button>
    <i class="sep"></i>
    <button aria-label="Dimension"><svg><use href="#dim"/></svg></button><button class="dd" aria-label="Dimension types"></button><button aria-label="Comment"><svg><use href="#comm"/></svg></button><button aria-label="Guidelines"><svg><use href="#gl"/></svg></button>
    <i class="sep"></i>
    <button aria-label="Surface"><svg><use href="#rect"/></svg></button><button class="dd" aria-label="Surface types"></button><button aria-label="Opening"><svg><use href="#openg"/></svg></button><button class="dd" aria-label="Opening types"></button><button aria-label="Intersection"><svg><use href="#inter"/></svg></button><button class="dd" aria-label="Intersection types"></button><button aria-label="Solid"><svg><use href="#solid"/></svg></button><button aria-label="New solid"><svg><use href="#solid2"/></svg></button><button class="dd" aria-label="Solid types"></button>
    <i class="sep"></i>
    <button aria-label="Combination"><svg><use href="#loadc"/></svg></button><button class="dd" aria-label="Combination types"></button><button aria-label="Nodal load"><svg><use href="#nload"/></svg></button><button aria-label="Member load"><svg><use href="#lload"/></svg></button><button aria-label="Line load"><svg><use href="#lload"/></svg></button><button aria-label="Surface load"><svg><use href="#sload"/></svg></button><button aria-label="Solid load"><svg><use href="#vload"/></svg></button><button class="dd" aria-label="Load types"></button>
  </div>
  <div class="group">
    <i class="grip"></i>
    <button aria-label="Pan"><svg><use href="#hand"/></svg></button><button aria-label="Zoom window"><svg><use href="#zoomr"/></svg></button><button aria-label="Zoom reset"><svg><use href="#zoomx"/></svg></button><button aria-label="Wireframe"><svg><use href="#wire"/></svg></button><button class="on" aria-label="Perspective"><svg><use href="#persp"/></svg></button>
    <i class="sep"></i>
    <button aria-label="View X"><svg><use href="#vx"/></svg></button><button aria-label="View Y"><svg><use href="#vy"/></svg></button><button aria-label="View Z"><svg><use href="#vz"/></svg></button><button aria-label="View -X"><svg><use href="#vmx"/></svg></button><button class="dd" aria-label="Views"></button><button aria-label="Visibility"><svg><use href="#micro"/></svg></button><button class="dd" aria-label="Visibility types"></button>
    <i class="sep"></i>
    <button aria-label="Clipping"><svg><use href="#clipc"/></svg></button><button class="dd" aria-label="Clipping types"></button>
  </div>
  <div class="group grow">
    <i class="grip"></i>
    <button aria-label="Deformation"><svg><use href="#frame"/></svg></button><button aria-label="Label"><svg><use href="#tag"/></svg></button>
    <i class="sep"></i>
    <button class="on2" aria-label="Member results"><svg><use href="#isec"/></svg></button><button aria-label="Surface results"><svg><use href="#rb"/></svg></button><button aria-label="Solid results"><svg><use href="#rbc"/></svg></button><button aria-label="Support reactions"><svg><use href="#garr"/></svg></button><button aria-label="Sections"><svg><use href="#plane"/></svg></button><button aria-label="Windows"><svg><use href="#multi"/></svg></button><button class="dd" aria-label="Window types"></button><button aria-label="Diagram"><svg><use href="#icurve"/></svg></button><button aria-label="Result tables"><svg><use href="#cells"/></svg></button>
  </div>
</div>
</div>

<main class="work">
<aside class="navi">
  <div class="navhead"><h2>Project Navigator - Results</h2>
    <button aria-label="Pin"><svg viewBox="0 0 10 10"><path d="M3 1.500h4v4H3zM1.500 5.500h7M5 6v4" stroke="#666" fill="none"/></svg></button>
    <button aria-label="Close navigator"><svg viewBox="0 0 10 10"><path d="M1 1l8 8M9 1L1 9" stroke="#666" stroke-width="1.400"/></svg></button>
  </div>
  <div class="navbody">
    <ul class="tree">
      <li><div class="row"><span class="lead"><b class="ex"></b></span><label><input type="checkbox"><svg><use href="#xs"/></svg>Cross-Section Classification</label></div>
        <ul><li><div class="row"><span class="lead"></span><label><input type="checkbox" checked><svg><use href="#xs"/></svg>Ultimate Limit State</label></div></li></ul></li>
      <li><div class="row"><span class="lead"><b class="ex"></b></span><label><input type="checkbox" checked><svg><use href="#xs"/></svg>Design</label></div>
        <ul><li><div class="row"><span class="lead"><b class="ex"></b></span><label><input type="checkbox" checked><svg><use href="#ul"/></svg>Ultimate Limit State</label></div>
          <ul>
            <li><div class="row"><span class="lead"></span><label><input type="checkbox" checked><svg><use href="#ul"/></svg>Cross-Section Design</label></div></li>
            <li><div class="row"><span class="lead"></span><label><input type="checkbox" checked><svg><use href="#ul"/></svg>Stability Design</label></div></li>
            <li><div class="row"><span class="lead"></span><label><input type="checkbox"><svg><use href="#ul"/></svg>Weld Design</label></div></li>
            <li><div class="row"><span class="lead"></span><label><input type="checkbox"><svg><use href="#ul"/></svg>Pressure Design</label></div></li>
            <li><div class="row"><span class="lead"></span><label><input type="checkbox"><svg><use href="#ul"/></svg>Plastic Design</label></div></li>
          </ul></li></ul></li>
    </ul>
  </div>
  <div class="navtabs">
    <button><svg><use href="#tdata"/></svg>Data</button><button><svg><use href="#tdisp"/></svg>Display</button><button><svg><use href="#tview"/></svg>Views</button><button class="sel"><svg><use href="#tres"/></svg>Results</button>
  </div>
</aside>
<section class="view">
  <p class="cap">Max Design Ratio [-]<br>RF-STEEL EC3 CA3 - Design bottom chord</p>
  <svg class="truss" viewBox="281 145 916 100" role="img" aria-label="Truss girder design ratios">
    <path d="M306 186L740 161.500 1174 186M306 193.500L740 169.500 1174 193.500" stroke="#888" fill="none" stroke-dasharray="1 1"/>
    <path d="M306 187L740 162.500 1174 187" stroke="#bbb" fill="none"/>
    <path d="M305 190l-7 8h17zM1173 190l-7 8h16z" fill="#7df07d"/><path d="M297 200h16" stroke="#aef5ae" stroke-width="2"/>
    <path d="M359 228.500L410 184l58 44.500 52-50.500 57 50.500 52-56.500 56 56.500 50-57M744 172l50 56.500 55-56.500 53 56.500 56-50.500 53 50.500 57-44.500 52 44.500" stroke="#1c1c8c" fill="none" stroke-width="1.300"/>
    <path d="M305 190L740 166l433 24" stroke="#000" stroke-width="2" fill="none"/>
    <path d="M305 190l54 38.500M1173 190l-53 38.500" stroke="#000" stroke-width="2"/>
    <g stroke-width="4"><path d="M360 229h60" stroke="#00e08a"/><path d="M420 229h48M1011 229h54" stroke="#00f010"/><path d="M1065 229h54" stroke="#00e08a"/><path d="M468 229h109M902 229h109" stroke="#cfcf00"/><path d="M577 229h325" stroke="#ffa500"/></g>
    <path d="M360 226.500h760M360 231.500h760" stroke="#aaa" stroke-dasharray="1 1"/>
    <g fill="#14f51e"><path d="M404 178h12v12h-12zM514 172h12v12h-12zM623 166h12v12h-12zM726 160h12v12h-12zM740 160h12v12h-12zM843 166h12v12h-12zM952 172h12v12h-12zM1062 178h12v12h-12z"/></g>
    <path d="M303 188h4v4h-4zM738 164h3v4h-3zM1171 188h4v4h-4zM358 227h2v3h-2zM1119 227h2v3h-2z" fill="#8b1a1a"/><path d="M739.500 227v4" stroke="#333"/>
    <g fill="#fbf4dc"><path d="M404 223h20v11h-20zM512 223h20v11h-20zM620 223h20v11h-20zM702 223h20v11h-20zM756 223h20v11h-20zM838 223h20v11h-20zM946 223h20v11h-20zM1055 223h20v11h-20z"/></g>
    <g class="tl"><text x="414" y="232">0.51</text><text x="522" y="232">0.76</text><text x="630" y="232">0.84</text><text x="712" y="232">0.81</text><text x="766" y="232">0.81</text><text x="848" y="232">0.84</text><text x="956" y="232">0.76</text><text x="1065" y="232">0.51</text></g>
  </svg>
  <p class="cap foot">Max Design Ratio: 0.84</p>
</section>

<section class="sheet">
<table>
  <colgroup><col class="w45"><col class="w149"><col class="w48"><col class="w60"><col class="w84"><col class="w24"><col><col class="w36"></colgroup>
  <tr class="letters"><th rowspan="3" class="load">Load-<br>ing</th><th class="act">A</th><th>B</th><th>C</th><th>D</th><th>E</th><th>F</th><th>G</th></tr>
  <tr class="h1"><th></th><th>Member</th><th>Location</th><th colspan="2">Design</th><th></th><th></th></tr>
  <tr class="h2"><th>Description</th><th>No.</th><th>x [m]</th><th>Ratio</th><th></th><th>Design According to Formula</th><th>DS</th></tr>
  <tr class="secr"><th></th><td colspan="7">Ultimate Limit State Design</td></tr>
  <tr class="dat"><th>RC1</th><td class="cell">GZT (STR/GEO) - Ständig /</td><td class="c">52</td><td class="r">3.150</td><td class="r"><i class="meter"></i>0.84</td><td class="c">≤ 1</td><td>CS181) Cross-section check - Bending, shear and axial force acc. to 6.2.9.1</td><td class="c">PT</td></tr>
  <tr class="emp"><th></th><td></td><td></td><td></td><td></td><td></td><td></td><td></td></tr>
</table>
</section>

<section class="details">
<div class="dleft">
  <h3>Details - Member 52 - x: 3.150 m - RC1</h3>
  <div class="dbody">
  <table>
    <colgroup><col><col class="w72"><col class="w66"><col class="w54"><col class="w48"><col class="w72"></colgroup>
    <tr class="hd"><td colspan="6"><button class="pm plus" aria-label="Expand"></button>Cross-Section Classification - No Compression</td></tr>
    <tr class="hd"><td colspan="6"><button class="pm" aria-label="Collapse"></button>Design Ratio</td></tr>
    <tr><td>Moment</td><td>M<sub>y,Ed</sub></td><td>6.39</td><td>kNm</td><td></td><td></td></tr>
    <tr><td>Plastic Section Modulus</td><td>W<sub>pl,y</sub></td><td>349.00</td><td>cm<sup>3</sup></td><td></td><td></td></tr>
    <tr><td>Yield Strength</td><td>f<sub>y</sub></td><td>35.50</td><td>kN/cm<sup>2</sup></td><td></td><td>3.2.1</td></tr>
    <tr><td>Partial Factor</td><td>γ<sub>M0</sub></td><td>1.000</td><td></td><td></td><td>6.1</td></tr>
    <tr><td>Moment Resistance</td><td>M<sub>pl,y,Rd</sub></td><td>123.90</td><td>kNm</td><td></td><td>Eq. (6.13)</td></tr>
    <tr><td>Shear Force</td><td>V<sub>z,Ed</sub></td><td>0.09</td><td>kN</td><td></td><td></td></tr>
    <tr class="hl"><td>Effective Shear Area</td><td>A<sub>v,z</sub></td><td>27.20</td><td>cm<sup>2</sup></td><td></td><td>6.2.6(3)</td></tr>
    <tr><td>Shear Force Resistance</td><td>V<sub>pl,z,Rd</sub></td><td>557.49</td><td>kN</td><td></td><td>Eq. (6.18)</td></tr>
    <tr><td>Criterion V<sub>z,Ed</sub> / V<sub>pl,z,Rd</sub></td><td>v<sub>z</sub></td><td>0.000</td><td></td><td>≤ 0.5</td><td>6.2.10(2)</td></tr>
    <tr><td>Cross-Sectional Area</td><td>A</td><td>54.40</td><td>cm<sup>2</sup></td><td></td><td></td></tr>
    <tr><td>Section Width</td><td>b</td><td>180.0</td><td>mm</td><td></td><td></td></tr>
    <tr><td>Section Thickness</td><td>t</td><td>8.0</td><td>mm</td><td></td><td></td></tr>
    <tr><td>Factor</td><td>a<sub>w</sub></td><td>0.471</td><td></td><td>≤ 0.5</td><td>6.2.9.1(5)</td></tr>
    <tr><td>Axial Force</td><td>N<sub>Ed</sub></td><td>1551.18</td><td>kN</td><td></td><td></td></tr>
    <tr><td>Design plastic resistance to normal forces</td><td>N<sub>pl,Rd</sub></td><td>1931.20</td><td>kN</td><td></td><td>(6.6)</td></tr>
    <tr><td>Ratio N<sub>Ed</sub> / N<sub>pl,Rd</sub></td><td>n</td><td>0.803</td><td></td><td></td><td>6.2.9.1(5)</td></tr>
    <tr><td>Moment Resistance</td><td>M<sub>N,pl,y,Rd</sub></td><td>31.88</td><td>kNm</td><td></td><td>Eq. (6.39)</td></tr>
    <tr><td>Design Component for M<sub>y</sub></td><td>η<sub>My</sub></td><td>0.20</td><td></td><td>≤ 1</td><td>(6.31)</td></tr>
    <tr><td>Design Ratio</td><td>η</td><td>0.84</td><td></td><td>≤ 1</td><td>(6.39*)</td></tr>
    <tr class="hd"><td colspan="6"><button class="pm" aria-label="Collapse"></button>Design Formula</td></tr>
  </table>
  <div class="scroll"><svg viewBox="0 0 16 16"><path d="M4.500 10L8 6.500l3.500 3.500" stroke="#444" stroke-width="2" fill="none"/></svg><div class="track"><div class="thumb"></div></div><svg viewBox="0 0 16 16"><path d="M4.500 6L8 9.500 11.500 6" stroke="#444" stroke-width="2" fill="none"/></svg></div>
  </div>
</div>
<div class="dright">
  <svg class="xsec" viewBox="732 447 209 343" role="img" aria-label="Cross-section QRO 180x8">
    <defs><pattern id="hatch" width="4" height="4" patternUnits="userSpaceOnUse" patternTransform="rotate(-50)"><path d="M0 0h4v4H0z" fill="#00008b"/><path d="M0 0v4" stroke="#dde" stroke-width="1.600"/></pattern></defs>
    <text x="736" y="459" class="st">10 - QRO 180x8 (Hot Formed)</text>
    <path d="M780 557h109l5 5v109l-5 5H780l-5-5V562zM784 563l-3 3v101l3 3h101l3-3V566l-3-3z" fill="url(#hatch)" fill-rule="evenodd" stroke="#000" stroke-width="1.200"/>
    <g stroke="#000" fill="none"><path d="M772 536.500h125M775.500 533v22M893.500 533v22M751 557.500h22M751 675.500h22M754.500 554v125M886 586.500h27"/></g>
    <g fill="#000"><circle cx="775.500" cy="536.500" r="2"/><circle cx="893.500" cy="536.500" r="2"/><circle cx="754.500" cy="557.500" r="2"/><circle cx="754.500" cy="675.500" r="2"/><circle cx="888.500" cy="586.500" r="2"/><circle cx="893.500" cy="586.500" r="2"/></g>
    <g stroke="#f0f" stroke-dasharray="9 3 2 3"><path d="M834.500 616.500h78M834.500 616.500v78"/></g>
    <path d="M912 613l7 3.500-7 3.500zM831 694h7l-3.500 7zM833 615h3v3h-3z" fill="#f0f"/>
    <text x="834" y="534" class="sd">180.0</text><text x="902" y="584" class="sd">8.0</text><text transform="translate(750 614) rotate(-90)" class="sd">180.0</text>
    <text x="919" y="628" class="sa">y</text><text x="836" y="710" class="sa">z</text>
    <text x="934" y="783" class="st" text-anchor="end">[mm]</text>
  </svg>
  <div class="dtools"><button aria-label="Info"><svg><use href="#bi"/></svg></button><button class="dis" aria-label="Material"><svg><use href="#bdrop"/></svg></button><span class="fill"></span><button class="blue" aria-label="Dimensions"><svg><use href="#bx"/></svg></button><button class="blue" aria-label="Axes"><svg><use href="#bax"/></svg></button><button aria-label="Reset zoom"><svg><use href="#bzx"/></svg></button></div>
</div>
</section>

<section class="panel">
  <div class="phead"><h2>Panel</h2><button aria-label="Close panel"><svg viewBox="0 0 10 10"><path d="M1 1l8 8M9 1L1 9" stroke="#666" stroke-width="1.400"/></svg></button></div>
  <div class="pbody">
    <p class="pm1">Max</p><p class="pm2">Design Ratio [-]</p>
    <svg class="legend" viewBox="0 0 144 212" role="img" aria-label="Colour scale">
      <g stroke="#000"><path d="M43.500 27.500h26v17h-26z" fill="#f00"/><path d="M43.500 44.500h26v17h-26z" fill="#ffa500"/><path d="M43.500 61.500h26v17h-26z" fill="#cfcf00"/><path d="M43.500 78.500h26v17h-26z" fill="#ff0"/><path d="M43.500 95.500h26v17h-26z" fill="#0f0"/><path d="M43.500 112.500h26v17h-26z" fill="#00e68a"/><path d="M43.500 129.500h26v17h-26z" fill="#00f5f5"/><path d="M43.500 146.500h26v17h-26z" fill="#0098ff"/><path d="M43.500 163.500h26v17h-26z" fill="#00f"/><path d="M43.500 180.500h26v17h-26z" fill="#0000a0"/><path d="M69 27.500h7M69 44.500h7M69 61.500h7M69 78.500h7M69 95.500h7M69 112.500h7M69 129.500h7M69 146.500h7M69 163.500h7M69 180.500h7M69 197.500h7"/></g>
      <g><text x="80" y="31">1.00</text><text x="80" y="48">0.90</text><text x="80" y="65">0.80</text><text x="80" y="82">0.70</text><text x="80" y="99">0.60</text><text x="80" y="116">0.50</text><text x="80" y="133">0.40</text><text x="80" y="150">0.30</text><text x="80" y="167">0.20</text><text x="80" y="184">0.10</text><text x="80" y="201">0.00</text></g>
    </svg>
    <dl class="mm"><dt>Max</dt><dd>:</dd><dd>0.84</dd><dt>Min</dt><dd>:</dd><dd>0.00</dd></dl>
    <button class="big">RF-STEEL EC3</button>
    <button class="zoomb" aria-label="Options"><svg><use href="#blist"/></svg></button>
  </div>
  <div class="ptabs"><button class="sel" aria-label="Colour scale"><svg><use href="#leg"/></svg></button><button aria-label="Factors"><svg><use href="#scale"/></svg></button><button aria-label="Filter"><svg><use href="#mic"/></svg></button></div>
</section>
</main>

<footer class="status">
  <div class="modes"><button class="in">SNAP</button><button>GRID</button><button class="in">CARTES</button><button class="in">OSNAP</button><button class="in">GLINES</button><button class="in">DXF</button></div>
  <div class="cells"><i></i><i></i><i></i><i></i></div>
  <svg class="size" viewBox="0 0 12 12" aria-hidden="true"><path d="M9 2h2v2H9zM9 6h2v2H9zM5 6h2v2H5zM9 10h2v2H9zM5 10h2v2H5zM1 10h2v2H1z" fill="#777"/></svg>
</footer>
</div>
</body>
</html>
```
FILE: styles.css
```css
* { box-sizing: border-box; }
body { margin: 0; font-family: "Open Sans", "Noto Sans", sans-serif; font-size: 12px; color: #111; }
h1, h2, h3, p, ul, dl, dd { margin: 0; padding: 0; font-weight: normal; }
button { border: 0; padding: 0; margin: 0; background: none; font: inherit; color: inherit; }
.sprite { position: absolute; width: 0; height: 0; }
.k { stroke: #333; fill: none; }
.xt { font: 9px "Liberation Serif", serif; }
.xb { font-weight: bold; }
.ax { font: 11px "Liberation Serif", serif; }
.bxt { font: 9px "Liberation Serif", serif; }
.five { font: bold 13px "Liberation Sans", sans-serif; fill: #f0c818; stroke: #6b5608; stroke-width: 1px; paint-order: stroke; }

.app { display: flex; flex-direction: column; min-height: 100vh; background: #cfd3dd; border: 1px solid #666; }

.title { display: flex; align-items: center; height: 30px; background: #fff; padding-left: 8px; }
.title .logo { width: 18px; height: 18px; margin-right: 3px; }
.title h1 { font: 11px/30px "Open Sans", sans-serif; color: #000; flex: 1; }
.winbtns { display: flex; }
.winbtns button { width: 46px; height: 30px; display: flex; align-items: center; justify-content: center; }
.winbtns svg { width: 12px; height: 12px; }

.menu { display: flex; align-items: center; gap: 1px; height: 25px; color: #4b525e; font: 11px "Open Sans", sans-serif; padding-right: 4px; }
.menu > button { padding: 0 7px; line-height: 22px; white-space: nowrap; }
.menu .bridge { width: 17px; height: 14px; margin-right: 1px; }
.mdi { margin-left: auto; display: flex; gap: 6px; align-self: flex-end; padding-bottom: 3px; }
.mdi svg { width: 10px; height: 10px; display: block; }
.grip { width: 10px; flex: none; align-self: stretch; margin: 5px 0; background: repeating-linear-gradient(#a3aabb 0 2px, transparent 2px 4px) 4px 0 / 2px 100% no-repeat; }
.menu .grip { width: 9px; }

.bars { display: flex; flex-direction: column; gap: 1px; padding-bottom: 1px; }
.bar { display: flex; gap: 2px; height: 25px; }
.group { display: flex; align-items: center; background: linear-gradient(#f0f3fa, #dde1eb); border-bottom: 1px solid #b4b9c6; border-radius: 4px; overflow: hidden; flex: none; }
.group.grow { flex: 1 1 0; min-width: 0; }
.group.last { width: 40px; }
.group button { width: 22px; height: 23px; flex: none; display: flex; align-items: center; justify-content: center; }
.group svg { width: 18px; height: 18px; flex: none; }
.group .on { background: linear-gradient(#fbd68c, #fbb95c 50%, #fddb8a); border: 1px solid #b99a62; border-radius: 2px; }
.group .on2 { background: #dfe5ea; border: 1px solid #8fa0a8; border-radius: 2px; }
.group .dd { width: 13px; }
.dd::after { content: ""; border: 3px solid transparent; border-top: 4px solid #777; border-bottom: 0; }
.sep { width: 8px; flex: none; height: 15px; background: linear-gradient(#a8aebb, #a8aebb) 3px 0 / 1px 100% no-repeat; }
.combo { position: relative; width: 216px; height: 19px; margin: 0 3px 0 2px; background: #fff; }
.combo select { appearance: none; border: 0; background: none; width: 200px; height: 19px; padding: 0 0 0 3px; font: 11px "Open Sans", sans-serif; color: #000; overflow: hidden; text-overflow: clip; }
.combo::after { content: ""; position: absolute; right: 5px; top: 8px; border: 3px solid transparent; border-top: 4px solid #777; border-bottom: 0; }
.combo::before { content: ""; position: absolute; right: 0; top: 0; width: 15px; height: 19px; background: #e9ecf2; border: 1px solid #d4d8e0; }

.work { flex: 1; display: flex; position: relative; }
.navi { width: 274px; flex: none; display: flex; flex-direction: column; margin-right: 5px; }
.navhead { display: flex; align-items: center; gap: 7px; height: 20px; padding: 0 5px 0 4px; background: #b6bdc9; color: #474d58; }
.navhead h2 { flex: 1; font: 11px "Open Sans", sans-serif; }
.navhead svg { width: 10px; height: 10px; display: block; }
.navbody { flex: 1; background: #fcfcf2; border: 2px solid #e4e8f2; border-bottom: 1px solid #666; }
.tree, .tree ul { list-style: none; }
.tree { padding: 0 0 0 7px; }
.tree ul { padding-left: 19px; }
.tree li { position: relative; }
.tree li::before { content: ""; position: absolute; left: 5px; top: 0; bottom: 0; border-left: 1px dotted #888; }
.tree li:last-child::before { bottom: auto; height: 9px; }
.tree > li:first-child::before { top: 9px; }
.row { display: flex; align-items: center; height: 18px; position: relative; }
.row label { display: flex; align-items: center; white-space: nowrap; font-family: "Open Sans", sans-serif; color: #000; }
.row svg { width: 18px; height: 16px; margin: 0 4px 0 1px; }
.lead { width: 17px; margin-right: 1px; height: 18px; flex: none; position: relative; }
.lead::before { content: ""; position: absolute; left: 6px; right: 0; top: 9px; border-top: 1px dotted #888; }
.ex { position: absolute; left: 1px; top: 5px; width: 9px; height: 9px; border: 1px solid #8c8c8c; border-radius: 1px; background: linear-gradient(#3c5cae, #3c5cae) center / 5px 1px no-repeat #eef0f4; }
.row input { appearance: none; margin: 0; width: 13px; height: 13px; flex: none; border: 1px solid #444; background: linear-gradient(135deg, #d4d9e2, #f8f9fb); position: relative; }
.row input:checked::after { content: ""; position: absolute; left: 4px; top: 0; width: 3px; height: 7px; border: solid #111; border-width: 0 2px 2px 0; transform: rotate(42deg); }
.navtabs { display: flex; height: 23px; gap: 5px; padding-left: 5px; color: #4b525e; font: 11px "Open Sans", sans-serif; }
.navtabs button { display: flex; align-items: center; gap: 2px; height: 21px; padding: 0 4px 0 1px; }
.navtabs svg { width: 16px; height: 16px; }
.navtabs .sel { background: #f3f5f8; border-radius: 0 0 3px 3px; border: 1px solid #b8e6ee; border-top: 0; }

.view { flex: 1; min-width: 0; background: #fff; border: 1px solid #666; border-right: 1px solid #aaa; border-bottom: 1px solid #ddd; display: flex; flex-direction: column; margin-right: 1px; }
.cap { font: 11px/14px Roboto, "Liberation Sans", sans-serif; color: #000; padding: 5px 0 0 4px; }
.foot { margin-top: auto; padding-bottom: 5px; }
.truss { width: 100%; height: auto; display: block; margin-top: 3px; }
.tl text { font: 9px "Liberation Sans", sans-serif; text-anchor: middle; }

.sheet { position: absolute; left: 51px; top: 212px; width: 888px; height: 95px; background: #f0f0f0; padding: 2px 3px 0 1px; overflow: hidden; font: 11px/15px Roboto, "Liberation Sans", sans-serif; }
.sheet table { border-collapse: collapse; table-layout: fixed; width: 100%; border-right: 1px solid #aaaaf0; }
.sheet th, .sheet td { height: 16px; padding: 0; font-weight: normal; border: 1px solid #a0a0a0; white-space: nowrap; overflow: hidden; }
.w24 { width: 24px; } .w36 { width: 36px; } .w45 { width: 45px; } .w48 { width: 48px; } .w54 { width: 54px; } .w60 { width: 60px; } .w66 { width: 66px; } .w72 { width: 72px; } .w84 { width: 84px; } .w149 { width: 149px; }
.sheet .letters th { background: #e1e1e1; border-bottom: 2px solid #777; line-height: 14px; height: 15px; }
.sheet .letters .act { background: #0078d7; color: #fff; }
.sheet .letters .load { border-bottom: 1px solid #a0a0a0; }
.sheet .h1 th { border-bottom: 0; background: #f0f0f0; }
.sheet .h2 th { border-top: 0; background: #f0f0f0; }
.sheet .secr td, .sheet .secr th { background: #e1e1e1; }
.sheet .secr td, .sheet .dat td { padding-left: 4px; }
.sheet .dat td { background: #fffaf0; }
.sheet .dat th { background: #0078d7; color: #fff; }
.sheet .dat .cell { border: 2px solid #000; background: #fff; padding-left: 2px; }
.sheet .c { text-align: center; padding: 0; }
.sheet .dat td.c { padding: 0; }
.sheet .r { text-align: right; padding-right: 4px; }
.meter { float: left; width: 31px; height: 11px; margin-top: 2px; background: #c0ffc0; }
.sheet .emp th { background: #e1e1e1; }
.sheet .emp td { background: #e8eeee; }

.details { position: absolute; left: 50px; top: 332px; width: 896px; background: #f0f0f0; padding: 6px 5px 3px 5px; display: flex; gap: 9px; font: 11px/15px Roboto, "Liberation Sans", sans-serif; }
.dleft { flex: 1; min-width: 0; border-right: 1px solid #aaaaf0; border-bottom: 1px solid #aaaaf0; padding-bottom: 4px; }
.dleft h3 { background: #dce6f4; color: #1c3f6e; font-size: 11px; line-height: 16px; padding-left: 2px; clip-path: polygon(0 0, calc(100% - 10px) 0, 100% 10px, 100% 100%, 0 100%); }
.dbody { display: flex; }
.dbody table { flex: 1; border-collapse: collapse; table-layout: fixed; background: #fff; width: 100%; }
.dbody td { height: 16px; padding: 0 0 0 4px; border: 1px solid #a0a0a0; white-space: nowrap; overflow: hidden; }
.dbody tr:not(.hd) td:first-child { padding-left: 27px; background: linear-gradient(#ccc, #ccc) 8px 7px / 12px 1px no-repeat, linear-gradient(#ddd, #ddd) 8px 0 / 1px 100% no-repeat; }
.dbody tr:not(.hd) td:nth-child(3) { text-align: right; padding-right: 4px; }
.dbody .hd td { padding-left: 3px; }
.dbody .hl { background: #ececec; }
.pm { width: 9px; height: 9px; border: 1px solid #000; background: linear-gradient(#000, #000) center / 5px 1px no-repeat #fff; margin-right: 2px; vertical-align: -1px; }
.pm.plus { background: linear-gradient(#000, #000) center / 5px 1px no-repeat, linear-gradient(#000, #000) center / 1px 5px no-repeat, #fff; }
sub, sup { font-size: 10px; line-height: 0; padding-left: 1px; }
sub { vertical-align: -2px; }
sup { vertical-align: 3px; }
.scroll { width: 16px; flex: none; display: flex; flex-direction: column; align-items: center; }
.scroll svg { width: 16px; height: 16px; }
.track { flex: 1; width: 15px; display: flex; flex-direction: column; padding: 38px 0 12px; }
.thumb { flex: 1; background: #a6a6a6; }
.dright { width: 211px; flex: none; border: 1px solid #aaaaf0; border-top-color: #777; border-left-color: #777; background: #eff3f9; }
.xsec { display: block; width: 100%; height: auto; background: linear-gradient(65deg, #fff, #fffdf6 40%, #fbf4e2); }
.st { font: 11px "Liberation Sans", sans-serif; }
.sd { font: 9px "Liberation Sans", sans-serif; text-anchor: middle; }
.sa { font: bold 11px "Liberation Mono", monospace; fill: #f0f; }
.dtools { display: flex; gap: 5px; padding: 3px 4px 4px 3px; }
.dtools .fill { flex: 1; }
.dtools button { width: 25px; height: 21px; background: #e1e1e1; border: 1px solid #adadad; display: flex; align-items: center; justify-content: center; }
.dtools .dis { background: #ccc; border-color: #bfbfbf; }
.dtools .blue { background: #cce4f7; border: 1px solid #005499; }
.dtools svg, .zoomb svg, .ptabs svg { width: 18px; height: 18px; }

.panel { position: absolute; right: 24px; top: 163px; width: 178px; height: 516px; background: #cfd3dd; border: 1px solid #aab; border-right: 2px solid #777; border-bottom: 2px solid #777; padding: 2px 3px 3px; display: flex; flex-direction: column; }
.phead { display: flex; align-items: center; background: #b6bdc9; height: 24px; padding: 0 2px 0 2px; color: #474d58; }
.phead h2 { flex: 1; font: bold 11px "Open Sans", sans-serif; }
.phead svg { width: 10px; height: 10px; display: block; }
.pbody { flex: 1; background: #f0f0f0; border: 1px solid #aeb4c2; border-bottom-color: #666; border-right: 2px solid #e8ebf4; padding: 5px 9px 2px 5px; display: flex; flex-direction: column; align-items: flex-start; font: 11px/17px "DejaVu Sans Condensed", "DejaVu Sans", sans-serif; }
.pm2 { font-family: "Liberation Sans", sans-serif; }
.legend { width: 146px; height: 214px; background: #faf7f1; border: 1px solid #999; border-right-color: #fff; border-bottom-color: #fff; }
.legend text { font: 12px Roboto, "Liberation Sans", sans-serif; }
.mm { display: grid; grid-template-columns: 24px 14px 34px; padding-left: 44px; width: 146px; margin-top: 10px; background: #f0f4fa; border: 1px solid #dbe6f5; border-right-color: #aaaaf0; border-bottom-color: #aaaaf0; }
.big { width: 138px; height: 23px; margin: 20px 0 0 4px; background: #e1e1e1; border: 1px solid #adadad; }
.zoomb { width: 25px; height: 21px; margin: auto 0 0 auto; background: #e1e1e1; border: 1px solid #adadad; display: flex; align-items: center; justify-content: center; }
.ptabs { display: flex; gap: 5px; height: 24px; padding-left: 1px; }
.ptabs button { width: 25px; height: 22px; display: flex; align-items: center; justify-content: center; }
.ptabs .sel { background: #f3f5f8; border: 1px solid #b8e6ee; border-top: 0; border-radius: 0 0 3px 3px; }

.status { display: flex; align-items: center; height: 22px; background: linear-gradient(#e6e8ee, #c4c8d2 20%, #a8adb8 40%, #b8bcc6); border-top: 1px solid #999fae; position: relative; }
.modes { display: flex; gap: 2px; margin-left: auto; padding-right: 188px; }
.modes button { height: 19px; padding: 0 2px 0 1px; font: 12px/17px "Open Sans", sans-serif; color: #222; border: 1px solid #eee; border-bottom-color: #999; border-right-color: #999; }
.modes .in { border-color: #222 #eee #eee #222; background: #b6bac4; }
.cells { display: flex; padding-right: 16px; }
.cells i { width: 74px; height: 18px; border-left: 1px solid #999; }
.cells i:first-child { width: 88px; }
.size { width: 12px; height: 12px; position: absolute; right: 0; bottom: 0; }
```
